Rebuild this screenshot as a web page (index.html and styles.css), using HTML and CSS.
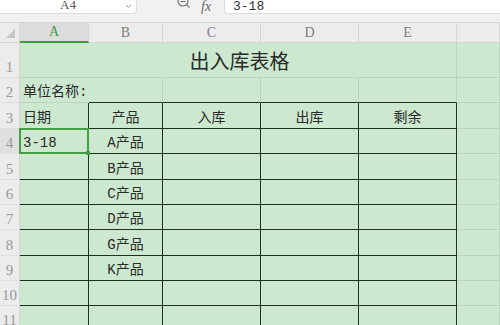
FILE: index.html
```html
<!DOCTYPE html>
<html>
<head>
  <meta charset="utf-8">
  <meta name="viewport" content="width=device-width, initial-scale=1">
  <title>出入库表格</title>
  <link rel="stylesheet" href="styles.css">
</head>
<body>
  <div id="formula-bar">
    <div class="name-box">
      <span class="name-text">A4</span>
      <svg class="drop" width="7" height="5" viewBox="0 0 7 5"><path d="M1 1 L3.5 3.5 L6 1" fill="none" stroke="#999" stroke-width="1"/></svg>
    </div>
    <div class="fx-tools">
      <svg class="zoom-icon" width="14" height="12" viewBox="0 0 14 12"><circle cx="6" cy="3" r="5" fill="none" stroke="#777" stroke-width="1.2"/><path d="M3.5 3.5 H8.5 M9.5 6.5 L12.5 9.5" stroke="#777" stroke-width="1.2" fill="none"/></svg>
      <span class="fx">fx</span>
    </div>
    <div class="formula-box"><span>3-18</span></div>
  </div>
  <div class="strip"></div>

  <div id="sheet">
    <div class="corner"><span class="tri"></span></div>
    <div class="ch active">A</div>
    <div class="ch">B</div>
    <div class="ch">C</div>
    <div class="ch">D</div>
    <div class="ch">E</div>
    <div class="ch"></div>

    <div class="rh">1</div>
    <div class="c title">出入库表格</div>
    <div class="c"></div>

    <div class="rh">2</div>
    <div class="c overflow">单位名称:</div>
    <div class="c top"></div>
    <div class="c top"></div>
    <div class="c top"></div>
    <div class="c top"></div>
    <div class="c"></div>

    <div class="rh">3</div>
    <div class="c t">日期</div>
    <div class="c t mid">产品</div>
    <div class="c t mid">入库</div>
    <div class="c t mid">出库</div>
    <div class="c t mid">剩余</div>
    <div class="c"></div>

    <div class="rh active">4</div>
    <div class="c t selected">3-18<span class="sel"><span class="handle"></span></span></div>
    <div class="c t mid">A产品</div>
    <div class="c t"></div>
    <div class="c t"></div>
    <div class="c t"></div>
    <div class="c"></div>

    <div class="rh">5</div>
    <div class="c t"></div>
    <div class="c t mid">B产品</div>
    <div class="c t"></div>
    <div class="c t"></div>
    <div class="c t"></div>
    <div class="c"></div>

    <div class="rh">6</div>
    <div class="c t"></div>
    <div class="c t mid">C产品</div>
    <div class="c t"></div>
    <div class="c t"></div>
    <div class="c t"></div>
    <div class="c"></div>

    <div class="rh">7</div>
    <div class="c t"></div>
    <div class="c t mid">D产品</div>
    <div class="c t"></div>
    <div class="c t"></div>
    <div class="c t"></div>
    <div class="c"></div>

    <div class="rh">8</div>
    <div class="c t"></div>
    <div class="c t mid">G产品</div>
    <div class="c t"></div>
    <div class="c t"></div>
    <div class="c t"></div>
    <div class="c"></div>

    <div class="rh">9</div>
    <div class="c t"></div>
    <div class="c t mid">K产品</div>
    <div class="c t"></div>
    <div class="c t"></div>
    <div class="c t"></div>
    <div class="c"></div>

    <div class="rh">10</div>
    <div class="c t"></div>
    <div class="c t"></div>
    <div class="c t"></div>
    <div class="c t"></div>
    <div class="c t"></div>
    <div class="c"></div>

    <div class="rh">11</div>
    <div class="c t"></div>
    <div class="c t"></div>
    <div class="c t"></div>
    <div class="c t"></div>
    <div class="c t"></div>
    <div class="c"></div>
  </div>
</body>
</html>
```

FILE: styles.css
```css
* {
  margin: 0;
  padding: 0;
  box-sizing: border-box;
}

body {
  width: 500px;
  height: 325px;
  overflow: hidden;
  background: #f1f1f1;
  font-family: "Liberation Mono", "Noto Sans CJK SC", monospace;
}

/* formula bar, cut off at the top */
#formula-bar {
  display: flex;
  height: 14px;
  background: #f1f1f1;
}
#formula-bar .name-box {
  width: 137px;
  background: #fff;
  border-right: 1px solid #dcdcdc;
  border-bottom: 1px solid #dcdcdc;
  border-bottom-right-radius: 4px;
  position: relative;
  display: flex;
  justify-content: center;
  align-items: flex-end;
  overflow: hidden;
}
#formula-bar .name-text {
  font-family: "Liberation Serif", serif;
  font-size: 13px;
  line-height: 13px;
  color: #555;
  margin-bottom: 2px;
}
#formula-bar .drop {
  position: absolute;
  right: 4px;
  top: 4px;
}
#formula-bar .fx-tools {
  width: 87px;
  display: flex;
  align-items: flex-start;
  padding-left: 40px;
  gap: 8px;
}
#formula-bar .zoom-icon {
  margin-top: -2px;
}
#formula-bar .fx {
  font-family: "Liberation Serif", serif;
  font-style: italic;
  font-size: 14px;
  line-height: 14px;
  padding: 0 2px;
  color: #666;
}
#formula-bar .formula-box {
  flex: 1;
  background: #fff;
  border-left: 1px solid #dcdcdc;
  border-bottom: 1px solid #dcdcdc;
  border-bottom-left-radius: 4px;
  padding-left: 8px;
  display: flex;
  align-items: center;
  overflow: hidden;
}
#formula-bar .formula-box span {
  font-size: 13px;
  line-height: 13px;
  color: #333;
}
.strip {
  height: 8px;
}

/* sheet grid */
#sheet {
  display: grid;
  grid-template-columns: 20px 69px 74px 98px 98px 98px 43px;
  grid-template-rows: 20px 35px 25px 26px 25px 26px 25px 25px 26px 25px 25px 25px;
  background: #cce8cf;
  border-top: 1px solid #d6d6d6;
}

.corner {
  background: #ececec;
  border-right: 1px solid #d4d4d4;
  border-bottom: 1px solid #d4d4d4;
  position: relative;
}
.corner .tri {
  position: absolute;
  right: 4px;
  bottom: 4px;
  width: 0;
  height: 0;
  border-left: 9px solid transparent;
  border-bottom: 9px solid #c4c4c4;
}

.ch {
  background: #ececec;
  border-right: 1px solid #d6d6d6;
  border-bottom: 1px solid #d4d4d4;
  font-family: "Liberation Serif", serif;
  font-size: 14px;
  color: #808080;
  display: flex;
  justify-content: center;
  align-items: center;
}
.ch.active {
  background: #dcdcdc;
  color: #3f9a3f;
  border-bottom: 2px solid #3f9a3f;
}

.rh {
  background: #ececec;
  border-right: 1px solid #d4d4d4;
  border-bottom: 1px solid #dedede;
  font-family: "Liberation Serif", serif;
  font-size: 15px;
  color: #999;
  display: flex;
  justify-content: center;
  align-items: flex-end;
  padding-bottom: 1px;
}
.rh.active {
  background: #e0e0e0;
}

.c {
  border-right: 1px solid #b9d6bc;
  border-bottom: 1px solid #b9d6bc;
  font-size: 14px;
  color: #2a2a2a;
  display: flex;
  align-items: flex-end;
  padding: 0 0 2px 3px;
  white-space: nowrap;
}
.c.mid {
  justify-content: center;
  padding-left: 0;
}
.c.title {
  grid-column: 2 / 7;
  justify-content: center;
  font-family: "Noto Sans CJK SC", sans-serif;
  font-size: 20px;
  line-height: 26px;
  padding-bottom: 3px;
}
.c.overflow {
  border-right: none;
}
.c.top {
  border-bottom: 1px solid #1f2f20;
}
.c.t {
  border-right: 1px solid #1f2f20;
  border-bottom: 1px solid #1f2f20;
}

.c.selected {
  position: relative;
}
.sel {
  position: absolute;
  left: -1px;
  top: -1px;
  right: -1px;
  bottom: -1px;
  border: 2px solid #43a043;
}
.sel .handle {
  position: absolute;
  right: -3px;
  bottom: -3px;
  width: 4px;
  height: 4px;
  background: #43a043;
}
```
